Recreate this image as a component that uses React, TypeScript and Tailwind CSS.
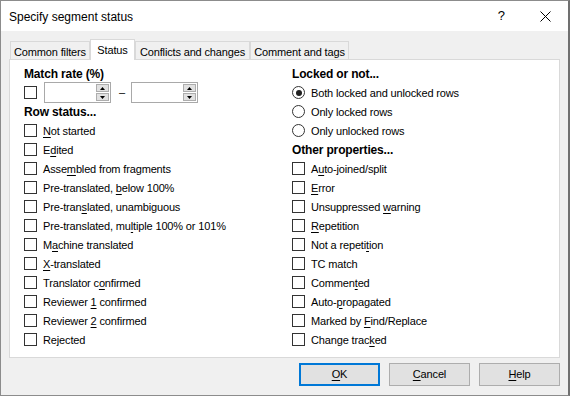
import React from "react";

type Item = [string, number?];

const rowStatus: Item[] = [
  ["Not started", 0],
  ["Edited", 1],
  ["Assembled from fragments", 4],
  ["Pre-translated, below 100%", 16],
  ["Pre-translated, unambiguous", 8],
  ["Pre-translated, multiple 100% or 101%", 18],
  ["Machine translated", 1],
  ["X-translated", 0],
  ["Translator confirmed", 12],
  ["Reviewer 1 confirmed", 9],
  ["Reviewer 2 confirmed", 9],
  ["Rejected", 2],
];

const otherProps: Item[] = [
  ["Auto-joined/split", 1],
  ["Error", 0],
  ["Unsuppressed warning", 13],
  ["Repetition", 0],
  ["Not a repetition", 12],
  ["TC match"],
  ["Commented", 6],
  ["Auto-propagated", 5],
  ["Marked by Find/Replace", 10],
  ["Change tracked", 11],
];

function Acc({ text, u }: { text: string; u?: number }) {
  if (u === undefined) return <>{text}</>;
  return (
    <>
      {text.slice(0, u)}
      <span className="underline underline-offset-[2px]">{text[u]}</span>
      {text.slice(u + 1)}
    </>
  );
}

function Box() {
  return <span className="h-[13px] w-[13px] shrink-0 border border-[#333333] bg-white" />;
}

function CheckRow({ item }: { item: Item }) {
  return (
    <div className="flex h-[19px] items-center gap-[6px]">
      <Box />
      <span className="pt-px">
        <Acc text={item[0]} u={item[1]} />
      </span>
    </div>
  );
}

function Radio({ label, checked }: { label: string; checked?: boolean }) {
  return (
    <div className="flex h-[19px] items-center gap-[6px]">
      <span className="flex h-[13px] w-[13px] shrink-0 items-center justify-center rounded-full border border-[#333333] bg-white">
        {checked && <span className="h-[6px] w-[6px] rounded-full bg-[#1f1f1f]" />}
      </span>
      <span className="pt-px">{label}</span>
    </div>
  );
}

function Heading({ children }: { children: React.ReactNode }) {
  return <div className="flex h-[19px] items-center pt-px text-[12px] font-bold">{children}</div>;
}

function Spin() {
  return (
    <div className="flex h-[21px] w-[67px] border border-[#a9a9a9] bg-white">
      <div className="flex-1" />
      <div className="my-px mr-px flex w-[13px] flex-col gap-px">
        <div className="flex flex-1 items-center justify-center border border-[#adadad] bg-[#e1e1e1]">
          <svg width="5" height="3" viewBox="0 0 5 3">
            <path d="M0 3h5L2.5 0z" fill="#000" />
          </svg>
        </div>
        <div className="flex flex-1 items-center justify-center border border-[#adadad] bg-[#e1e1e1]">
          <svg width="5" height="3" viewBox="0 0 5 3">
            <path d="M0 0h5L2.5 3z" fill="#000" />
          </svg>
        </div>
      </div>
    </div>
  );
}

function Tab({ label, width, selected }: { label: string; width: string; selected?: boolean }) {
  return (
    <div
      className={
        selected
          ? `relative z-10 -mb-px flex h-[21px] ${width} items-start justify-center border-x border-t border-[#d9d9d9] bg-white pt-[2px]`
          : `flex h-[18px] ${width} items-start justify-center border-x border-t border-[#d9d9d9] bg-[#f0f0f0] pt-[2px]`
      }
    >
      {label}
    </div>
  );
}

function Button({ label, u, primary }: { label: string; u: number; primary?: boolean }) {
  return (
    <div
      className={
        primary
          ? "flex h-[23px] w-[81px] items-center justify-center border-2 border-[#0078d7] bg-[#e1e1e1]"
          : "flex h-[23px] w-[81px] items-center justify-center border border-[#adadad] bg-[#e1e1e1]"
      }
    >
      <Acc text={label} u={u} />
    </div>
  );
}

export default function App() {
  return (
    <div className="flex h-[396px] w-[570px] flex-col border-y border-l border-r-2 border-y-[#8c8c8c] border-l-[#8c8c8c] border-r-[#707070] bg-[#f0f0f0] font-['Liberation_Sans',Arial,sans-serif] text-[11px] tracking-[-0.15px] text-black">
      <div className="flex h-[30px] shrink-0 items-center bg-white pl-[8px] pr-[17px] text-[12px] tracking-normal">
        <span className="flex-1 pt-[1px]">Specify segment status</span>
        <span className="mr-[35px] text-[13px]">?</span>
        <svg width="11" height="11" viewBox="0 0 11 11">
          <path d="M0.5 0.5l10 10M10.5 0.5l-10 10" stroke="#000" strokeWidth="1" />
        </svg>
      </div>

      <div className="flex flex-1 flex-col px-[8px] pt-[8px]">
        <div className="flex h-[20px] items-end pl-[1px]">
          <Tab label="Common filters" width="w-[80px]" />
          <Tab label="Status" width="w-[45px]" selected />
          <Tab label="Conflicts and changes" width="w-[115px]" />
          <Tab label="Comment and tags" width="w-[99px]" />
        </div>

        <div className="flex h-[299px] border border-[#d9d9d9] bg-white pl-[14px] pt-[4px]">
          <div className="flex w-[268px] flex-col">
            <Heading>Match rate (%)</Heading>
            <div className="flex h-[19px] items-center">
              <Box />
              <div className="ml-[7px]">
                <Spin />
              </div>
              <span className="ml-[8px] mr-[6px]">–</span>
              <Spin />
            </div>
            <Heading>Row status...</Heading>
            {rowStatus.map((r) => (
              <CheckRow key={r[0]} item={r} />
            ))}
          </div>
          <div className="flex flex-col">
            <Heading>Locked or not...</Heading>
            <Radio label="Both locked and unlocked rows" checked />
            <Radio label="Only locked rows" />
            <Radio label="Only unlocked rows" />
            <Heading>Other properties...</Heading>
            {otherProps.map((r) => (
              <CheckRow key={r[0]} item={r} />
            ))}
          </div>
        </div>

        <div className="mt-[5px] flex justify-end gap-[9px]">
          <Button label="OK" u={0} primary />
          <Button label="Cancel" u={0} />
          <Button label="Help" u={0} />
        </div>
      </div>
    </div>
  );
}
